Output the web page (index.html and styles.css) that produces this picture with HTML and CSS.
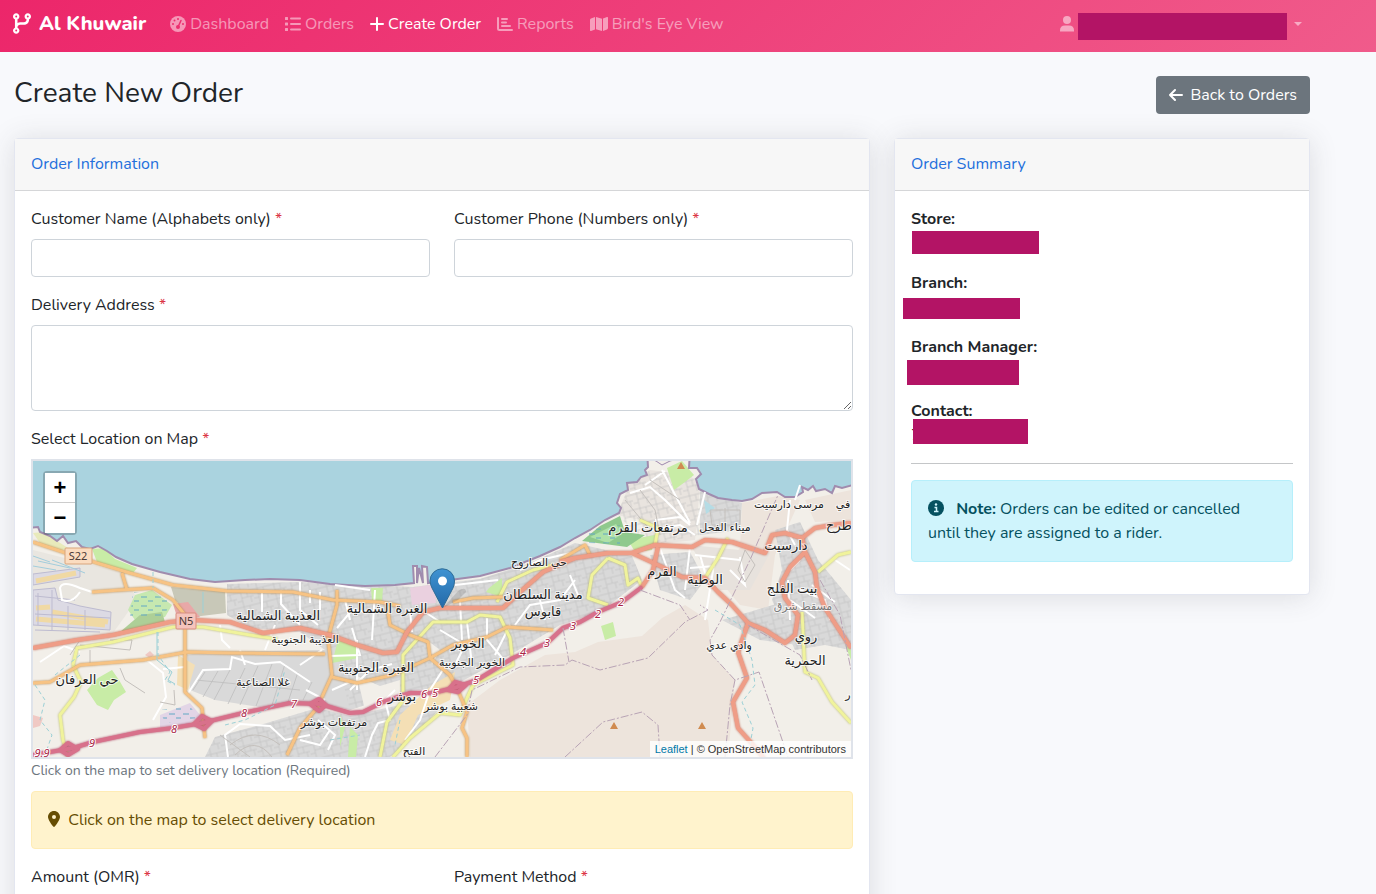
FILE: index.html
```html
<!DOCTYPE html>
<html lang="en">

<head>
    <meta charset="UTF-8">
    <meta name="viewport" content="width=device-width, initial-scale=1.0">
    <title>Create New Order</title>
    <link rel="stylesheet" href="styles.css">
</head>

<body>
    <nav class="navbar">
        <a class="brand" href="#">
            <svg width="18" height="21" viewBox="0 0 448 512" fill="currentColor"><path fill-rule="evenodd" d="M80 104a24 24 0 1 0 0-48 24 24 0 1 0 0 48zm80-24c0 32.800-19.700 61-48 73.300v87.800c18.800-10.900 40.700-17.100 64-17.100h96c35.300 0 64-28.700 64-64v-6.700C307.700 141 288 112.800 288 80c0-44.200 35.800-80 80-80s80 35.800 80 80c0 32.800-19.700 61-48 73.300V160c0 70.700-57.300 128-128 128H176c-35.300 0-64 28.700-64 64v6.700c28.300 12.300 48 40.500 48 73.300c0 44.200-35.800 80-80 80s-80-35.800-80-80c0-32.800 19.700-61 48-73.300V153.300C19.700 141 0 112.800 0 80C0 35.800 35.800 0 80 0s80 35.800 80 80zm232 0a24 24 0 1 0 -48 0 24 24 0 1 0 48 0zM80 456a24 24 0 1 0 0-48 24 24 0 1 0 0 48z"/></svg>
            Al Khuwair
        </a>
        <ul class="nav-links">
            <li><a href="#">
                <svg width="16" height="16" viewBox="0 0 16 16">
                    <mask id="dial"><rect width="16" height="16" fill="#fff"/><circle cx="8" cy="3" r="1"/><circle cx="4.500" cy="4.500" r="1"/><circle cx="3" cy="8" r="1"/><circle cx="13" cy="8" r="1"/><circle cx="8" cy="11" r="2"/><path d="M8 11l3-6.500" stroke="#000" stroke-width="1.500" stroke-linecap="round"/></mask>
                    <circle cx="8" cy="8" r="8" fill="currentColor" mask="url(#dial)"/>
                </svg>Dashboard</a></li>
            <li><a href="#">
                <svg width="16" height="16" viewBox="0 0 16 16" fill="currentColor"><rect y="1" width="3" height="3" rx=".5"/><rect y="6.500" width="3" height="3" rx=".5"/><rect y="12" width="3" height="3" rx=".5"/><rect x="5" y="1.500" width="11" height="2" rx="1"/><rect x="5" y="7" width="11" height="2" rx="1"/><rect x="5" y="12.500" width="11" height="2" rx="1"/></svg>Orders</a></li>
            <li><a class="active" href="#">
                <svg width="14" height="16" viewBox="0 0 14 16" fill="none" stroke="currentColor" stroke-width="2" stroke-linecap="round"><path d="M7 2v12M1 8h12"/></svg>Create Order</a></li>
            <li><a href="#">
                <svg width="16" height="16" viewBox="0 0 16 16" fill="none" stroke="currentColor" stroke-width="2" stroke-linecap="round" stroke-linejoin="round"><path d="M1 2v10.500q0 1.500 1.500 1.500H15M5 3h5M5 6.500h4M5 10h8"/></svg>Reports</a></li>
            <li><a href="#">
                <svg width="18" height="16" viewBox="0 0 18 16" fill="currentColor"><path d="M0 4q0-1 1-1.400L5 1v12.500L1 15q-1 .3-1-.7zM6 1l6 1.700V15l-6-1.700zM13 2.500L17 1q1-.3 1 .7V12q0 1-1 1.400L13 15z"/></svg>Bird's Eye View</a></li>
        </ul>
        <button class="user-menu" type="button" aria-label="User menu">
            <svg width="14" height="16" viewBox="0 0 14 16" fill="currentColor"><circle cx="7" cy="4" r="4"/><path d="M0 15.500V14.500Q0 9.500 5 9.500h4q5 0 5 5v1z"/></svg>
            <span class="user-name"></span>
            <span class="caret"></span>
        </button>
    </nav>

    <main>
        <header class="page-head">
            <h1>Create New Order</h1>
            <a class="btn-back" href="#">
                <svg width="14" height="14" viewBox="0 0 14 14" fill="none" stroke="currentColor" stroke-width="2" stroke-linecap="round" stroke-linejoin="round"><path d="M13 7H1M6 2L1 7l5 5"/></svg>
                Back to Orders
            </a>
        </header>

        <div class="row">
            <div class="col">
                <section class="card">
                    <h2>Order Information</h2>
                    <form class="card-body">
                        <div class="pair">
                            <div class="field">
                                <label for="name">Customer Name (Alphabets only) <i>*</i></label>
                                <input type="text" id="name">
                            </div>
                            <div class="field">
                                <label for="phone">Customer Phone (Numbers only) <i>*</i></label>
                                <input type="tel" id="phone">
                            </div>
                        </div>
                        <div class="field">
                            <label for="address">Delivery Address <i>*</i></label>
                            <textarea id="address"></textarea>
                        </div>
                        <div class="field-title">Select Location on Map <i>*</i></div>
                        <div class="map">
                            <svg class="tiles" viewBox="33 461 818 296" preserveAspectRatio="xMidYMid slice">
                                <defs>
                                    <pattern id="streets" width="17" height="15" patternUnits="userSpaceOnUse" patternTransform="rotate(-14)">
                                        <path d="M0 3h17M5 0v15M5 9h12M11 3v6M14 9v6M0 12h5" fill="none" stroke="#bdbdbd" stroke-width=".6"/>
                                    </pattern>
                                    <pattern id="wetland" width="14" height="9" patternUnits="userSpaceOnUse">
                                        <path d="M1 3h6M8 7h5" stroke="#62a8c4"/>
                                    </pattern>
                                </defs>
                                <rect x="33" y="461" width="818" height="296" fill="#f2efe9"/>

                                <!-- bare rock -->
                                <path fill="#ede4dc" d="M470 757L467 705 500 680 545 655 575 652 598 642 642 636 662 618 685 605 708 620 712 655 735 680 728 757zM742 503L778 496 800 500 775 555 768 610 740 605 715 575 740 548zM805 500L851 490V520L815 522z"/>

                                <!-- built-up areas -->
                                <g fill="#d9d9d9">
                                    <path d="M227 584L300 582 413 587 480 579 530 563 575 543 632 556 642 580 600 612 560 625 510 655 455 685 405 692 350 710 317 702 260 707 215 700 190 690 187 655 205 652 325 650 300 632 250 628 227 615z"/>
                                    <path d="M215 737L260 725 317 708 350 716 400 705 440 708 425 725 390 757H205z"/>
                                    <path d="M700 490L742 503 740 530 700 535z"/>
                                    <path d="M775 530L800 522 818 560 851 600V650L825 645 795 650 772 600 782 570z"/>
                                    <path d="M650 555L690 552 705 580 690 600 660 590z"/>
                                    <path d="M690 545L770 553 750 590 720 590z" fill="#e7e2dd"/>
                                    <path d="M617 515L630 483 650 470 690 475 700 487 695 540 650 545 640 520z" fill="#e9e4df"/>
                                    <path d="M722 620L790 600 798 645 760 640z"/>
                                </g>
                                <g fill="url(#streets)">
                                    <path d="M227 584L300 582 413 587 480 579 530 563 575 543 632 556 642 580 600 612 560 625 510 655 455 685 405 692 350 710 335 650 300 632 250 628 227 615z"/>
                                    <path d="M215 737L260 725 317 708 350 716 400 705 440 708 425 725 390 757H205z"/>
                                    <path d="M617 515L630 483 650 470 690 475 740 503 740 530 700 535 650 545z"/>
                                    <path d="M775 530L800 522 818 560 851 600V650L825 645 795 650 772 600 782 570zM722 620L790 600 798 645 760 640zM650 555L690 552 705 580 690 600 660 590z"/>
                                </g>
                                <path fill="none" stroke="#bebebe" stroke-width=".8" d="M205 672L193 690M218 671L203 697M230 670L214 700M245 668L228 704M258 666L240 705M272 664L256 706M285 664L272 705M298 672L288 702M312 682L303 700M196 680L300 690"/>
                                <path fill="#f2efe9" d="M357 676L380 686 400 680 400 700 365 710zM427 640L440 650 432 665z"/>
                                <path fill="#f4dfb5" d="M432 685L455 672 450 700 418 715 405 745 390 740 400 715zM178 655L195 665 188 690 177 685z"/>
                                <path fill="#c8c8b8" d="M171 587L225 592 226 613 193 617 175 600z"/>

                                <!-- airport -->
                                <path fill="#e9e6e0" d="M33 550L120 572 135 595 128 612 108 640 33 650z"/>
                                <g fill="#dcdae4" stroke="#bdbbd0">
                                    <path d="M33 574L80 568V577L33 585zM33 590L55 588 58 600 80 606 111 612 110 630 33 625z"/>
                                </g>
                                <path fill="none" stroke="#f0d9a4" stroke-width="5" d="M36 581L76 573M36 608L50 607M52 612L108 622M36 619L105 625"/>
                                <path fill="none" stroke="#bdbbd0" d="M35 596L75 600M38 593V625M52 590V630M68 606V630M85 610V630M35 614L110 618M35 630L100 632"/>
                                <path fill="none" stroke="#fff" stroke-width="2" d="M92 592L80 588Q62 580 60 588L62 600Q72 604 80 592"/>
                                <path fill="none" stroke="#a2cddc" d="M33 556L50 562M38 561L70 568M33 566L56 570M52 560L85 573"/>

                                <!-- parks -->
                                <g fill="#c8eca6">
                                    <path d="M92 549L104 548 115 559 137 568 133 573 97 562z"/>
                                    <path d="M135 595L152 590 172 605 165 617 135 620 128 610z" fill="#c6e8b0"/>
                                    <path d="M120 632L140 615 162 612 165 622z" fill="#adcf97"/>
                                    <path d="M87 690L98 678 112 670 119 680 126 692 114 700 108 710 97 705z"/>
                                    <path d="M667 468L682 461 694 475 685 482 674 490z"/>
                                    <path d="M628 540L655 535 652 550 635 552z"/>
                                    <path d="M601 626L613 622 616 636 605 640z"/>
                                    <path d="M338 640L357 643 358 658 332 663zM350 727L358 735 356 757H348zM340 715L345 727 340 747zM845 645L851 650V660zM489 588L502 578 502 597 486 592zM371 588L383 588 382 602 372 600z"/>
                                    <path d="M33 533L43 532 68 548 60 551 40 543z" fill="#e8eabb"/>
                                </g>
                                <path fill="#8fc98d" d="M582 541L600 526 620 516 625 532 645 535 627 547z"/>
                                <path fill="#aee1a8" d="M590 537L616 524 622 534 608 543z"/>
                                <path fill="url(#wetland)" d="M133 592L170 598 165 617 130 617zM588 530L620 525 620 544 588 543z"/>
                                <path fill="#e2d5e6" d="M160 715L190 703 201 716 185 726 160 727z"/>
                                <path fill="#ead0df" d="M410 588L435 584 436 603 412 605z"/>
                                <path fill="url(#wetland)" d="M160 710L190 706 198 718 165 723z"/>
                                <path fill="#e8a8a8" d="M173 604L188 602 200 617 178 620z"/>
                                <path fill="#f0c9c4" d="M33 715L43 718 40 726 33 728zM145 655L150 651 154 655 150 658z"/>

                                <!-- sea -->
                                <path class="coast" d="M25 450V528L38 527 40 532 50 536 57 541 63 536 68 543 76 541 82 547 90 549 98 546 107 551 116 557 132 564 160 572 190 579 215 582 245 580 270 579 300 580 330 584 365 586 395 585 414 583 413 566 417 566 417 583 419 568 423 583 422 566 427 567 428 583 450 580 480 576 510 568 540 556 560 547 575 538 590 530 605 520 619 513 621 508 617 503 620 494 628 490 627 483 637 482 641 477 647 475 645 470 648 467 647 450H690L689 468 697 468 701 474 696 479 699 489 709 494 718 498 732 500 742 501 752 499 762 493 777 492 785 497 795 497 803 492 802 487 808 490 813 486 816 491 825 489 832 493 835 486 842 488 860 483V450z"/>
                                <path fill="#f2efe9" stroke="#9d87ad" d="M656 461L662 465 670 461 678 459H650z"/>
                                <path fill="#b5dce5" d="M704 500L715 508 706 514z"/>

                                <!-- minor streets -->
                                <g class="minor">
                                    <path d="M187 695L203 670 230 669 232 657 255 664 280 662 310 682M240 650L245 665M265 650L275 625M300 582V610L318 625M262 590V612M281 590V604L300 625M40 662L64 646 80 652M147 660L163 673 166 697 153 720M163 669L185 667M220 625L222 640 230 648M330 656L360 655 352 628M357 640V690M375 590L372 640M310 590V603M320 592V610M345 600L350 620M395 690L385 700 390 720 378 723 372 735 365 757M228 757L225 735 240 724 270 726 285 740 310 735M440 630L465 645 455 665M460 602L462 640M467 622L472 665M487 618V640L508 665M495 655L510 625M430 690L420 720 405 740M446 665L430 690M455 585L498 580"/>
                                    <path d="M335 585L370 590M337 628L352 610 370 612M410 610L412 632M425 612L440 622M520 570L540 560 575 552M515 625L530 605 560 600 575 580M545 620L540 600M300 665L322 650M332 690L350 682M306 690L325 700M300 740L320 745 330 730M580 600L570 575M350 690L370 670 392 664M318 720L335 735 328 750"/>
                                    <path d="M630 493L650 487 665 500 690 525 680 517 655 520M645 485L665 471M662 470L690 523M705 492L697 525M690 547L685 590M695 555L740 560M700 555L710 590M715 558L705 620M660 548L675 590 685 598M795 500L800 485M790 500L787 530 795 545M788 580L790 620M800 590L825 600 830 620M790 570L800 560M835 560L850 570M730 570L745 585 740 557M650 530L680 525 695 535M690 568L715 566M790 600L815 618M812 585L835 602"/>
                                    <path class="thin" d="M120 668L125 680 145 693M160 702L175 705 174 690M80 645L130 650 132 640 110 640M70 655L80 640M90 650V665M745 550L755 565 745 582 738 570zM640 490L655 510 660 535M625 500L650 530M650 480L680 500M710 510H740V525H712zM725 508V528M220 735L250 757M230 745Q255 725 280 745M235 755Q255 735 272 757"/>
                                </g>

                                <g class="secondary">
                                    <path d="M73 665L77 648 113 642 173 627 203 627 250 635 277 639M73 665L81 682 74 697 60 715 63 740 68 757"/>
                                    <path d="M403 692V655L433 622 467 622 480 615 500 617 510 638 513 665 473 685 467 698 460 715 440 713 410 738 393 757M407 695L387 722 380 757"/>
                                    <path d="M497 602L507 582 533 570 553 565M608 558L592 575 588 598 608 605M608 558L625 565 628 585 638 578 642 587"/>
                                    <path d="M728 538L718 558 705 578M851 552L838 555 818 572M802 612L805 672 818 678 832 702 851 723M655 545L658 528 640 520"/>
                                </g>
                                <g class="primary">
                                    <path d="M33 542L63 552 97 563 130 573 173 585 227 591 293 592 333 600 380 602 400 606M453 602L473 598 503 597"/>
                                    <path d="M122 573L127 590M92 592L120 590 153 588 173 600 185 615V692L202 708 205 738"/>
                                    <path d="M33 683L50 682 80 665 143 660 187 652 230 653 325 654M337 590V605L328 638 332 675 317 708 300 728 287 755"/>
                                    <path d="M332 677L357 683 393 675 430 658 453 645 487 637 507 627 553 630M387 605L390 625 410 635 428 642 430 658 450 675 457 688 467 712 462 728 467 738V757M560 560L585 545 590 555"/>
                                </g>
                                <g class="trunk">
                                    <path d="M33 648L77 640 113 635 170 622 193 620 230 622 263 633 300 628 330 635 357 645 383 653 397 652 407 632 423 612 440 608H503L520 592 543 572 575 558 608 553 632 553 655 545 692 547 705 540 732 542 765 553 772 535 785 533 802 538 815 528 832 525 851 523"/>
                                    <path d="M575 558L560 562M632 553L658 565 682 577 705 578 718 592 732 605 748 623 765 630 785 643 795 635 798 615 785 598 782 582 790 567 805 552 802 538M805 552L815 572 817 588 825 608 838 628 851 648M658 547L653 570 642 587"/>
                                    <path d="M748 623L738 652 747 678 733 702 738 728 755 747 765 760"/>
                                </g>
                                <g class="motorway">
                                    <path d="M33 755L73 748 93 742 140 732 173 728 202 723 243 713 290 703 320 704 350 713 363 712 383 702 410 693 433 693 457 687 477 680 513 658 547 643 563 628 580 622 598 612 622 602 642 587"/>
                                    <path d="M60 750L68 743 78 749 68 755zM194 724L202 716 212 721 204 729zM448 690L455 682 466 685 458 692zM310 704L319 699 326 705 319 711z"/>
                                </g>

                                <!-- boundaries and streams -->
                                <path class="boundary" d="M435 757L467 715 472 690 520 667 565 665 572 660 600 670 648 658 685 622 708 610 700 605M563 628L569 662M565 757L603 722 642 712 658 725 660 757M725 757L730 705 735 680 759 672 788 757M735 680L712 655 710 640 720 622 750 560 778 495M640 590L680 605 690 620M748 625L800 655 812 680M820 580L840 615 851 670"/>
                                <path class="stream" d="M35 685L45 700 40 720 52 735 45 755M55 675L80 655M153 572V588M158 632V655L170 672 165 680 175 685M225 725L245 720 275 705 285 670M330 740L360 735M400 720L395 745M715 610L740 625 752 660 755 685 742 702 753 728 750 745"/>
                                <path class="stream solid" d="M203 592V613M157 632V660L172 672 168 680 175 684"/>

                                <g fill="#d08b50">
                                    <path d="M681 462L685 469H677zM614 722L618 729H610zM702 722L706 729H698z"/>
                                </g>
                                <g class="shield">
                                    <rect x="65" y="548" width="27" height="16" rx="1" fill="#fbdcc0" stroke="#d9a57c"/>
                                    <text x="78" y="560">S22</text>
                                    <rect x="176" y="613" width="20" height="16" rx="1" fill="#f5c4bc" stroke="#d88c80"/>
                                    <text x="186" y="625">N5</text>
                                </g>
                                <g class="exits">
                                    <text x="42" y="757">9.9</text><text x="92" y="747">9</text><text x="174" y="733">8</text><text x="244" y="717">8</text><text x="294" y="708">7</text>
                                    <text x="379" y="706">6</text><text x="424" y="698">6</text><text x="435" y="697">5</text><text x="476" y="684">5</text><text x="523" y="656">4</text><text x="547" y="647">3</text><text x="573" y="630">3</text><text x="598" y="618">2</text><text x="621" y="606">2</text>
                                </g>
                                <g class="places">
                                    <text x="278" y="620">العذيبة الشمالية</text>
                                    <text x="387" y="613">الغبرة الشمالية</text>
                                    <text x="376" y="672">الغبرة الجنوبية</text>
                                    <text x="468" y="648">الخوير</text>
                                    <text x="87" y="684">حي العرفان</text>
                                    <text x="402" y="701">بوشر</text>
                                    <text x="543" y="599">مدينة السلطان</text>
                                    <text x="543" y="616">قابوس</text>
                                    <text x="648" y="532">مرتفعات القرم</text>
                                    <text x="786" y="550">دارسيت</text>
                                    <text x="662" y="576">القرم</text>
                                    <text x="705" y="584">الوطية</text>
                                    <text x="792" y="593">بيت الفلج</text>
                                    <text x="806" y="641">روي</text>
                                    <text x="805" y="665">الحمرية</text>
                                    <text x="839" y="530">طرح</text>
                                </g>
                                <g class="places small">
                                    <text x="305" y="643">العذيبة الجنوبية</text>
                                    <text x="472" y="666">الخوير الجنوبية</text>
                                    <text x="263" y="686">غلا الصناعية</text>
                                    <text x="334" y="726">مرتفعات بوشر</text>
                                    <text x="451" y="710">شعبية بوشر</text>
                                    <text x="414" y="755">الفتح</text>
                                    <text x="539" y="566">حي الصاروج</text>
                                    <text x="725" y="531">ميناء الفحل</text>
                                    <text x="789" y="508">مرسى دارسيت</text>
                                    <text x="729" y="649">وادي عدي</text>
                                    <text x="843" y="508">في</text>
                                    <text x="848" y="698">ر</text>
                                    <text class="faded" x="803" y="610">مسقط شرق</text>
                                </g>

                                <!-- marker -->
                                <linearGradient id="pin" x2="0" y2="1"><stop stop-color="#3f93d2"/><stop offset="1" stop-color="#2469a8"/></linearGradient>
                                <path fill="#000" opacity=".12" d="M443 608L458 591Q466 586 466 592L458 600z"/>
                                <path fill="url(#pin)" stroke="#2e6c97" d="M442.500 608L432 588Q430 584 430 581A12 12 0 0 1 454.500 581Q454.500 584 453 588z"/>
                                <circle cx="442.500" cy="581" r="4.500" fill="#fff"/>
                            </svg>
                            <div class="zoom">
                                <button type="button" aria-label="Zoom in">+</button>
                                <button type="button" aria-label="Zoom out">&minus;</button>
                            </div>
                            <div class="attribution"><a href="#">Leaflet</a> | &copy; OpenStreetMap contributors</div>
                        </div>
                        <small class="hint">Click on the map to set delivery location (Required)</small>
                        <div class="alert alert-warning">
                            <svg width="12" height="16" viewBox="0 0 384 512" fill="currentColor"><path fill-rule="evenodd" d="M216 499C267 435 384 279 384 192C384 86 298 0 192 0S0 86 0 192c0 87 117 243 168 307c12 15 35 15 48 0zM192 128a64 64 0 1 1 0 128 64 64 0 1 1 0-128z"/></svg>
                            Click on the map to select delivery location
                        </div>
                        <div class="pair">
                            <div class="field">
                                <label for="amount">Amount (OMR) <i>*</i></label>
                                <input type="text" id="amount">
                            </div>
                            <div class="field">
                                <label for="payment">Payment Method <i>*</i></label>
                                <select id="payment"></select>
                            </div>
                        </div>
                    </form>
                </section>
            </div>

            <div class="col">
                <section class="card">
                    <h2>Order Summary</h2>
                    <div class="card-body">
                        <p class="detail"><strong>Store:</strong><span class="mask mask-store"></span></p>
                        <p class="detail"><strong>Branch:</strong><span class="mask mask-branch"></span></p>
                        <p class="detail"><strong>Branch Manager:</strong><span class="mask mask-manager"></span></p>
                        <p class="detail"><strong>Contact:</strong>7<span class="mask mask-contact"></span></p>
                        <hr>
                        <div class="alert alert-info">
                            <svg width="16" height="16" viewBox="0 0 16 16"><circle cx="8" cy="8" r="8" fill="currentColor"/><circle cx="8" cy="4.500" r="1.200" fill="#cff4fc"/><path d="M6.500 7.500H8.500V11.500M6 11.500h4.500" fill="none" stroke="#cff4fc" stroke-width="1.500"/></svg>
                            <strong>Note:</strong> Orders can be edited or cancelled until they are assigned to a rider.
                        </div>
                    </div>
                </section>
            </div>
        </div>
    </main>
</body>

</html>
```

FILE: styles.css
```css
* {
    box-sizing: border-box;
}

body {
    margin: 0;
    height: 100vh;
    display: flex;
    flex-direction: column;
    background: #f8f9fc;
    color: #212529;
    font-family: Nunito, Lato, sans-serif;
    font-size: 16px;
    line-height: 24px;
}

a {
    text-decoration: none;
}

i {
    color: #dc3545;
    font-style: normal;
}

.navbar {
    display: flex;
    align-items: center;
    flex-shrink: 0;
    height: 52px;
    padding: 0 74px 5px 13px;
    background: linear-gradient(135deg, #ec266a, #f05b8b);
}

.brand {
    display: flex;
    align-items: center;
    gap: 8px;
    margin-right: 24px;
    color: #fff;
    font-size: 20px;
    font-weight: 800;
}

.nav-links {
    display: flex;
    gap: 16px;
    margin: 0;
    padding: 0;
    list-style: none;
}

.nav-links a {
    display: flex;
    align-items: center;
    gap: 4px;
    color: rgba(255, 255, 255, .5);
}

.nav-links .active {
    color: #fff;
}

.user-menu {
    display: flex;
    align-items: center;
    margin-left: auto;
    padding: 0;
    border: 0;
    background: none;
    color: rgba(255, 255, 255, .5);
}

.user-name {
    width: 209px;
    height: 27px;
    margin: 6px 7px 0 4px;
    background: #b31465;
}

.caret {
    border: 4px solid transparent;
    border-top-color: currentColor;
    border-bottom: 0;
}

main {
    flex: 1;
    padding: 24px 66px 24px 14px;
    overflow-y: auto;
    scrollbar-width: none;
}

.page-head {
    display: flex;
    justify-content: space-between;
    margin-bottom: 24px;
}

h1 {
    margin: 0;
    font-size: 28px;
    font-weight: 400;
    line-height: 34px;
}

.btn-back {
    display: flex;
    align-items: center;
    gap: 8px;
    padding: 7px 13px;
    border-radius: 4px;
    background: #6c757d;
    color: #fff;
}

.row {
    display: grid;
    grid-template-columns: 2fr 1fr;
    align-items: start;
    margin: 0 -12px;
}

.col {
    min-width: 0;
    padding: 0 12px;
}

.card {
    border: 1px solid #e3e6f0;
    border-radius: 4px;
    background: #fff;
    box-shadow: 0 2px 28px rgba(58, 59, 69, .15);
}

h2 {
    margin: 0;
    padding: 13px 16px 14px;
    border-bottom: 1px solid #d5d6d8;
    background: #f7f7f7;
    color: #2470dc;
    font-size: 16px;
    font-weight: 400;
}

.card-body {
    padding: 16px;
}

.pair {
    display: grid;
    grid-template-columns: 1fr 1fr;
    gap: 24px;
}

.field {
    margin-bottom: 16px;
}

label,
.field-title {
    display: block;
    margin-bottom: 8px;
}

input,
textarea,
select {
    display: block;
    width: 100%;
    height: 38px;
    padding: 6px 12px;
    border: 1px solid #ced4da;
    border-radius: 4px;
    background: #fff;
    font: inherit;
}

textarea {
    height: 86px;
}

.map {
    position: relative;
    height: 300px;
    border: 2px solid #dfe3ea;
    overflow: hidden;
}

.tiles {
    display: block;
    width: 100%;
    height: 100%;
}

.tiles text {
    font-family: "Noto Sans", "DejaVu Sans", sans-serif;
    text-anchor: middle;
}

.coast {
    fill: #aad3df;
    stroke: #a08cae;
    stroke-width: 2;
}

.minor path {
    fill: none;
    stroke: #fff;
    stroke-width: 2;
}

.minor .thin {
    stroke: #c4c0bc;
    stroke-width: 1;
}

.secondary path,
.primary path,
.trunk path,
.motorway path {
    fill: none;
    stroke-width: 3;
    stroke-linejoin: round;
}

.secondary {
    filter: drop-shadow(0 0 1px #b5b66a);
}

.secondary path {
    stroke: #f0f39c;
}

.primary {
    filter: drop-shadow(0 0 1px #b98a4e);
}

.primary path {
    stroke: #f7c384;
}

.trunk {
    filter: drop-shadow(0 0 1px #c46a55);
}

.trunk path {
    stroke: #ef9d87;
    stroke-width: 4;
}

.motorway {
    filter: drop-shadow(0 0 1px #b04a68);
}

.motorway path {
    stroke: #d8718b;
    stroke-width: 4;
}

.boundary {
    fill: none;
    stroke: #b8a3b5;
    stroke-dasharray: 8 2 2 2;
}

.stream {
    fill: none;
    stroke: #9bd0d6;
    stroke-dasharray: 4 3;
}

.stream.solid {
    stroke-dasharray: none;
}

.shield text {
    fill: #4c3a36;
    font-size: 11px;
}

.exits text {
    fill: #a82445;
    stroke: #fff;
    stroke-width: 2;
    paint-order: stroke;
    font-size: 11px;
    font-style: italic;
}

.places text {
    fill: #222;
    stroke: rgba(255, 255, 255, .7);
    stroke-width: 2;
    paint-order: stroke;
    font-size: 13px;
}

.places.small text {
    font-size: 11px;
}

.places .faded {
    fill: #777;
}

.zoom {
    position: absolute;
    top: 10px;
    left: 10px;
    border: 2px solid rgba(0, 0, 0, .2);
    border-radius: 4px;
    background-clip: padding-box;
}

.zoom button {
    display: block;
    width: 30px;
    height: 30px;
    padding: 0;
    border: 0;
    background: #fff;
    color: #000;
    font: bold 22px/30px "Liberation Sans", sans-serif;
}

.zoom button:first-child {
    border-bottom: 1px solid #ccc;
}

.attribution {
    position: absolute;
    right: 0;
    bottom: 0;
    padding: 0 5px;
    background: rgba(255, 255, 255, .8);
    color: #333;
    font: 11px/16px "Liberation Sans", Arial, sans-serif;
}

.attribution a {
    color: #0078a8;
}

.hint {
    display: block;
    margin-bottom: 8px;
    color: #6c757d;
    font-size: 14px;
}

.alert {
    margin-bottom: 16px;
    padding: 16px;
    border: 1px solid;
    border-radius: 4px;
}

.alert svg {
    margin-right: 4px;
    vertical-align: -2px;
}

.alert-warning {
    border-color: #ffecb5;
    background: #fff3cd;
    color: #664d03;
}

.alert-info {
    border-color: #b6effb;
    background: #cff4fc;
    color: #055160;
}

.alert-info svg {
    margin-right: 8px;
}

.detail {
    position: relative;
    height: 48px;
    margin: 0 0 16px;
}

.detail strong {
    display: block;
}

/* covers over the private values */
.mask {
    position: absolute;
    background: #b31465;
}

.mask-store {
    top: 24px;
    left: 1px;
    width: 127px;
    height: 23px;
}

.mask-branch {
    top: 27px;
    left: -8px;
    width: 117px;
    height: 21px;
}

.mask-manager {
    top: 25px;
    left: -4px;
    width: 112px;
    height: 25px;
}

.mask-contact {
    top: 20px;
    left: 2px;
    width: 115px;
    height: 25px;
}

hr {
    margin: 16px 0;
    border: 0;
    border-top: 1px solid #c4c6c8;
}
```
